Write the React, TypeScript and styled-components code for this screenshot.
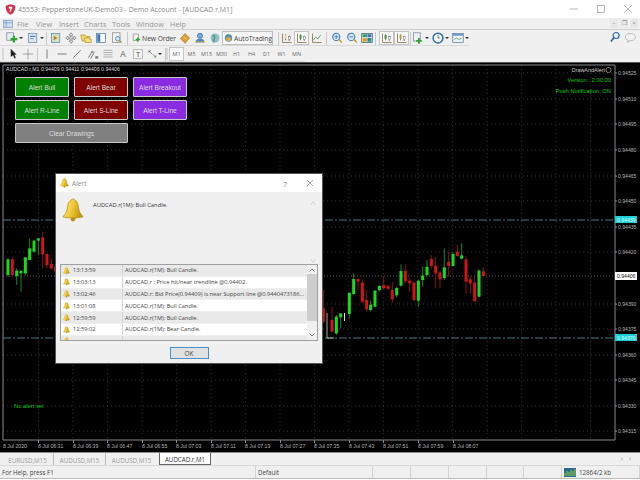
import React from 'react'
import styled, { createGlobalStyle } from 'styled-components'

const GlobalStyle = createGlobalStyle`
  html, body { margin: 0; padding: 0; background: #fff; }
  * { box-sizing: border-box; }
`

const UI_FONT = `"Open Sans", "Noto Sans", "Liberation Sans", sans-serif`
const CHART_FONT = `"Liberation Sans", Arial, sans-serif`

// candles read off the picture: [x, high, low, body top, body bottom, up?]  (in 3x crop units)
const leftCandles: number[][] = [
  [24, 145, 200, 148, 195, 1], [37, 140, 200, 148, 195, 0], [50, 175, 225, 182, 198, 1],
  [63, 180, 245, 183, 190, 1], [76, 140, 195, 142, 190, 1], [89, 85, 150, 115, 150, 1],
  [102, 90, 128, 92, 125, 1], [115, 85, 135, 85, 92, 1], [128, 65, 175, 82, 133, 0],
  [141, 130, 175, 132, 165, 0], [154, 145, 180, 162, 175, 0], [167, 165, 195, 170, 185, 0],
]
const rightCandles: number[][] = [
  [10, 240, 340, 295, 335, 0], [36, 290, 365, 330, 365, 0], [49, 315, 375, 320, 370, 1],
  [62, 310, 355, 310, 322, 1], [88, 248, 325, 248, 312, 1], [101, 190, 255, 207, 252, 1],
  [114, 205, 240, 207, 215, 0], [127, 210, 280, 218, 275, 0], [140, 240, 305, 270, 298, 0],
  [152, 272, 305, 284, 300, 1], [165, 240, 292, 242, 290, 1], [178, 225, 245, 228, 240, 1],
  [191, 198, 240, 225, 235, 0], [204, 225, 240, 228, 236, 0], [217, 215, 278, 240, 268, 0],
  [230, 230, 262, 234, 256, 1], [243, 163, 230, 183, 227, 1], [256, 163, 220, 183, 214, 0],
  [269, 205, 245, 212, 220, 0], [282, 212, 272, 218, 270, 0], [295, 208, 290, 212, 272, 1],
  [308, 170, 230, 197, 210, 1], [321, 150, 200, 170, 195, 1], [334, 135, 175, 147, 168, 0],
  [347, 140, 235, 167, 190, 0], [360, 185, 235, 187, 208, 0], [373, 115, 210, 172, 204, 1],
  [386, 125, 200, 155, 168, 0], [399, 125, 170, 132, 168, 1], [412, 105, 140, 125, 138, 0],
  [425, 100, 148, 136, 146, 1], [438, 140, 250, 148, 215, 0], [451, 200, 250, 208, 220, 0],
  [464, 195, 275, 218, 274, 0], [477, 178, 262, 182, 260, 1], [490, 172, 200, 184, 198, 0],
]

const prices = [
  ['0.94525', 73], ['0.94510', 99], ['0.94495', 124], ['0.94480', 150], ['0.94465', 176],
  ['0.94450', 201], ['0.94435', 227], ['0.94420', 252], ['0.94390', 304], ['0.94375', 329],
  ['0.94360', 355], ['0.94345', 380], ['0.94330', 406], ['0.94315', 431],
] as [string, number][]

const times = [
  ['8 Jul 06:31', 38], ['8 Jul 06:39', 73], ['8 Jul 06:47', 107], ['8 Jul 06:55', 142],
  ['8 Jul 07:03', 176], ['8 Jul 07:11', 211], ['8 Jul 07:19', 245], ['8 Jul 07:27', 280],
  ['8 Jul 07:35', 314], ['8 Jul 07:43', 349], ['8 Jul 07:51', 383], ['8 Jul 07:59', 418],
  ['8 Jul 08:07', 453],
] as [string, number][]

const gridX = [38.6, 73, 107.6, 142, 176.6, 211, 245.6, 280, 314.6, 349, 383.6, 418, 452.6, 487, 521.6, 556, 590.6]

const alerts = [
  ['13:13:59', 'AUDCAD.r(1M): Bull Candle.'],
  ['13:03:13', 'AUDCAD.r : Price hit/near trendline @0.94402.'],
  ['13:02:46', 'AUDCAD.r: Bid Price(0.94409) is near Support line @0.9440473186...'],
  ['13:01:08', 'AUDCAD.r(1M): Bull Candle.'],
  ['12:59:59', 'AUDCAD.r(1M): Bull Candle.'],
  ['12:59:02', 'AUDCAD.r(1M): Bear Candle.'],
]

const menus = [['File', 19], ['View', 23], ['Insert', 25], ['Charts', 28], ['Tools', 24], ['Window', 34], ['Help', 20]] as [string, number][]
const periods = ['M1', 'M5', 'M15', 'M30', 'H1', 'H4', 'D1', 'W1', 'MN']

const Page = styled.div`
  width: 640px;
  height: 480px;
  display: flex;
  flex-direction: column;
  overflow: hidden;
  background: #f0f0f0;
  font-family: ${UI_FONT};
`

const TitleBar = styled.div`
  height: 18px;
  flex: none;
  background: #fff;
  display: flex;
  align-items: center;
  padding-left: 5px;
  font-size: 7px;
  color: #8a8a8a;
  gap: 2px;
`

const TitleText = styled.span`
  flex: 1;
`

const WinButton = styled.span`
  width: 25px;
  height: 18px;
  display: flex;
  align-items: center;
  justify-content: center;
`

const MenuBar = styled.div`
  height: 12px;
  flex: none;
  display: flex;
  align-items: center;
  padding-left: 3px;
  font-size: 7.4px;
  color: #969696;
  border-bottom: 1px solid #cfcfcf;
`

const MenuItem = styled.span<{ $w: number }>`
  width: ${p => p.$w}px;
  flex: none;
`

const MdiButtons = styled.div`
  margin-left: auto;
  display: flex;
  gap: 2px;
  padding-right: 2px;
`

const MdiButton = styled.span`
  width: 8px;
  height: 9px;
  background: #e8e8e8;
  color: #8a8a8a;
  font-size: 6px;
  line-height: 9px;
  text-align: center;
`

const ToolRow = styled.div<{ $end: number; $pad: number }>`
  height: 16px;
  flex: none;
  display: flex;
  align-items: center;
  padding-left: ${p => p.$pad}px;
  position: relative;
  background: linear-gradient(#d9d9d9, #d9d9d9) no-repeat 0 100% / ${p => p.$end}px 1px;
`

const Tool = styled.span<{ $w?: number; $pressed?: boolean }>`
  width: ${p => p.$w ?? 15}px;
  height: 14px;
  flex: none;
  display: flex;
  align-items: center;
  justify-content: center;
  gap: 1px;
  background: ${p => (p.$pressed ? '#f8f8f8' : 'transparent')};
  border: 1px solid ${p => (p.$pressed ? '#c4c4c4' : 'transparent')};
`

const Caret = styled.i`
  width: 0;
  height: 0;
  border-left: 2px solid transparent;
  border-right: 2px solid transparent;
  border-top: 2px solid #333;
`

const Sep = styled.span<{ $l?: number; $r?: number }>`
  width: 1px;
  height: 13px;
  flex: none;
  background: #c8c8c8;
  margin-left: ${p => p.$l ?? 0}px;
  margin-right: ${p => p.$r ?? 0}px;
`

const TextTool = styled.span<{ $w: number; $pressed?: boolean }>`
  width: ${p => p.$w}px;
  height: 14px;
  flex: none;
  display: flex;
  align-items: center;
  gap: 1px;
  padding-left: 1px;
  font-size: 6.8px;
  letter-spacing: -0.1px;
  color: #444;
  white-space: nowrap;
  background: ${p => (p.$pressed ? '#f8f8f8' : 'transparent')};
  border: 1px solid ${p => (p.$pressed ? '#bdbdbd' : 'transparent')};
`

const Grabber = styled.span`
  width: 2px;
  height: 12px;
  flex: none;
  margin-right: 1px;
  background: #d8d8d8;
`

const Period = styled.span<{ $active?: boolean }>`
  width: 15px;
  height: 14px;
  flex: none;
  display: flex;
  align-items: center;
  justify-content: center;
  font-size: 5.4px;
  color: #666;
  background: ${p => (p.$active ? '#fafafa' : 'transparent')};
  border: 1px solid ${p => (p.$active ? '#c4c4c4' : 'transparent')};
`

const RightTools = styled.div`
  position: absolute;
  right: 2px;
  top: 1px;
  display: flex;
  gap: 3px;
`

const ChartArea = styled.div`
  flex: 1;
  position: relative;
  background: #000;
  overflow: hidden;
  border-top: 1px solid #555;
`

const ChartDrawing = styled.svg`
  display: block;
  width: 640px;
  height: 389px;
  text {
    font-family: ${CHART_FONT};
  }
`

const PanelGrid = styled.div`
  position: absolute;
  left: 15px;
  top: 14px;
  display: grid;
  grid-template-columns: repeat(3, 54px);
  grid-auto-rows: 20px;
  column-gap: 5px;
  row-gap: 3px;
`

const PanelButton = styled.div<{ $bg: string; $span?: number }>`
  grid-column: span ${p => p.$span ?? 1};
  background: ${p => p.$bg};
  border: 1px solid #c8c8c8;
  border-radius: 1px;
  color: #dcdcdc;
  font: 6.6px ${CHART_FONT};
  display: flex;
  align-items: center;
  justify-content: center;
`

const Dialog = styled.div`
  position: absolute;
  left: 56px;
  top: 111px;
  width: 266px;
  height: 189px;
  background: #f0f0f0;
  display: flex;
  flex-direction: column;
  box-shadow: 0 0 0 1px #555;
`

const DialogTitle = styled.div`
  height: 18px;
  flex: none;
  background: #fff;
  display: flex;
  align-items: center;
  padding: 0 8px 0 4px;
  gap: 3px;
  font-size: 6.6px;
  color: #8a8a8a;
`

const DialogHelp = styled.span`
  margin-left: auto;
  margin-right: 16px;
  font-size: 8px;
  color: #888;
`

const MessageRow = styled.div`
  height: 72px;
  flex: none;
  display: flex;
  padding: 6px 4px 0 6px;
`

const MessageText = styled.div`
  flex: 1;
  padding: 3px 0 0 9px;
  font-size: 5.8px;
  color: #333;
`

const MessageScroll = styled.div`
  width: 10px;
  height: 62px;
  margin-top: 3px;
  display: flex;
  flex-direction: column;
  justify-content: space-between;
  align-items: center;
`

const AlertList = styled.div`
  height: 77px;
  flex: none;
  margin: 0 4px;
  border: 1px solid #a0a0a0;
  display: flex;
  background: #fff;
  overflow: hidden;
`

const AlertRows = styled.div`
  flex: 1;
  overflow: hidden;
`

const AlertRow = styled.div<{ $odd: boolean }>`
  height: 11.8px;
  display: flex;
  align-items: center;
  background: ${p => (p.$odd ? '#e9e9e9' : '#fff')};
  border-bottom: 1px solid #efefef;
  font-size: 5.7px;
  color: #444;
`

const AlertTime = styled.span`
  width: 62px;
  height: 100%;
  flex: none;
  display: flex;
  align-items: center;
  gap: 3px;
  padding-left: 2px;
  border-right: 1px solid #d2d2d2;
`

const AlertMessage = styled.span`
  padding-left: 2px;
  white-space: nowrap;
`

const ListScroll = styled.div`
  width: 10px;
  flex: none;
  background: #f0f0f0;
  display: flex;
  flex-direction: column;
  align-items: center;
  justify-content: space-between;
  padding: 3px 0;
`

const ListThumb = styled.div`
  width: 100%;
  height: 47px;
  margin-bottom: 10px;
  background: #cdcdcd;
`

const DialogFooter = styled.div`
  flex: 1;
  display: flex;
  justify-content: center;
  padding-top: 6px;
`

const OkButton = styled.div`
  width: 39px;
  height: 12px;
  background: #e1e1e1;
  border: 1px solid #4a90c8;
  font-size: 6.4px;
  color: #444;
  display: flex;
  align-items: center;
  justify-content: center;
`

const TabBar = styled.div`
  height: 13px;
  flex: none;
  display: flex;
  align-items: stretch;
  padding-left: 2px;
  border-top: 1px solid #888;
  background: #f0f0f0;
  position: relative;
`

const Tab = styled.div<{ $active?: boolean; $line?: boolean }>`
  width: 52px;
  flex: none;
  display: flex;
  align-items: center;
  justify-content: center;
  padding-top: 2px;
  font-size: 6.2px;
  color: ${p => (p.$active ? '#333' : '#9a9a9a')};
  background: ${p => (p.$active ? '#fff' : 'transparent')};
  border-right: 1px solid ${p => (p.$line ? '#bbb' : 'transparent')};
  ${p => p.$active && 'border: 1px solid #666; border-top: 0; margin-left: 1px;'}
`

const TabArrows = styled.span`
  position: absolute;
  right: 3px;
  top: 1px;
  font-size: 7px;
  color: #888;
  letter-spacing: 6px;
`

const StatusBar = styled.div`
  height: 14px;
  flex: none;
  display: flex;
  border-top: 1px solid #d8d8d8;
  border-bottom: 1px solid #bbb;
  font-size: 6.2px;
  color: #444;
`

const StatusCell = styled.div<{ $w: number }>`
  width: ${p => p.$w}px;
  flex: none;
  display: flex;
  align-items: center;
  gap: 3px;
  padding-left: 2px;
  border-right: 1px solid #d0d0d0;
  white-space: nowrap;
`

const Footer = styled.div`
  height: 1px;
  flex: none;
  background: #fff;
`

const Ico = ({ children, s = 12 }: { children: React.ReactNode; s?: number }) => (
  <svg width={s} height={s} viewBox="0 0 16 16" style={{ display: 'block' }}>
    {children}
  </svg>
)

const Chevron = ({ d, color }: { d: string; color: string }) => (
  <svg width="6" height="4" viewBox="0 0 6 4" style={{ display: 'block', flex: 'none' }}>
    <path d={d} fill="none" stroke={color} strokeWidth="0.800" />
  </svg>
)

const Bell = ({ size }: { size: number }) => (
  <svg width={size} height={size * 1.08} viewBox="0 0 24 26" style={{ display: 'block', flex: 'none' }}>
    <defs>
      <linearGradient id="bellGold" x1="0" x2="1" y1="0" y2="0.3">
        <stop offset="0" stopColor="#ffe98a" />
        <stop offset="0.5" stopColor="#f4cc3a" />
        <stop offset="1" stopColor="#c79a12" />
      </linearGradient>
    </defs>
    <circle cx="12" cy="23" r="2.6" fill="#b98f1a" />
    <path d="M12 1c-1.4 0-2 .8-2.2 1.8C6.8 4 6.3 7 6 10.5 5.700 14.500 3.500 18 1 20.500c3 1.800 19 1.800 22 0-2.500-2.500-4.700-6-5-10C17.700 7 17.200 4 14.200 2.800 14 1.800 13.400 1 12 1z" fill="url(#bellGold)" stroke="#b08a18" strokeWidth="0.8" />
  </svg>
)

const Logo = () => (
  <svg width="11" height="11" viewBox="0 0 16 16" style={{ display: 'block', flex: 'none' }}>
    <path d="M1 2.500 8 0.500l7 2c0 6-1.500 10.500-7 13-5.500-2.500-7-7-7-13z" fill="#d8304a" />
    <path d="M5.500 4h5v1.600L8 11.500 6.500 11 8 6.500H5.500z" fill="#fff" />
  </svg>
)

const ChartDoc = ({ accent }: { accent: string }) => (
  <Ico>
    <rect x="2" y="2" width="11" height="12" fill="#dce8f4" stroke="#6a86a6" />
    <rect x="4" y="5" width="7" height="1.500" fill={accent} />
    <rect x="4" y="8" width="5" height="1.500" fill="#7fa0c0" />
  </Ico>
)

const GreenPlus = () => (
  <Ico>
    <rect x="1" y="1" width="9" height="10" fill="#e6eef6" stroke="#7a8a9a" />
    <path d="M9 5h3v3h3v3h-3v3H9v-3H6V8h3z" fill="#2fa52f" />
  </Ico>
)

const Magnifier = ({ sign, color }: { sign: string; color: string }) => (
  <Ico>
    <circle cx="7" cy="6.500" r="4.800" fill="#d5e9fa" stroke={color} strokeWidth="1.400" />
    <path d="M10.500 10l4 4" stroke="#c79a2a" strokeWidth="2.200" />
    <path d={sign} stroke={color} strokeWidth="1.200" />
  </Ico>
)

const CandleTool = ({ mark }: { mark: string }) => (
  <Ico>
    <path d="M2 2v12h12" fill="none" stroke="#7a6a3a" />
    <path d="M6 3v8M11 5v7" stroke="#555" />
    <rect x="4.800" y="4" width="2.600" height="5" fill={mark} />
    <rect x="9.800" y="6" width="2.600" height="4" fill="#fff" stroke="#555" strokeWidth="0.500" />
  </Ico>
)

const FirstToolbar = () => (
  <ToolRow $end={469} $pad={4}>
    <Tool $w={21}><GreenPlus /><Caret /></Tool>
    <Tool $w={21}><ChartDoc accent="#3a78c0" /><Caret /></Tool>
    <Sep $r={1} />
    <Tool>
      <Ico><rect x="2" y="2" width="11" height="12" fill="#cfe3c0" stroke="#5a8ab0" /><path d="M5 5l5 3-5 3z" fill="#c87a20" /></Ico>
    </Tool>
    <Tool>
      <Ico><path d="M8 1l2.500 3H9v3h3V5.500L15 8l-3 2.500V9H9v3h1.500L8 15l-2.500-3H7V9H4v1.500L1 8l3-2.500V7h3V4H5.500z" fill="#e8e8e8" stroke="#666" strokeWidth="0.800" /></Ico>
    </Tool>
    <Tool>
      <Ico><path d="M1 4h6l1.500 2H13v6H3z" fill="#f4d76a" stroke="#b99020" /><path d="M6 8h6l1.500 2H15v4H7z" fill="#f8e28e" stroke="#b99020" /></Ico>
    </Tool>
    <Tool $w={16}>
      <Ico><rect x="2" y="2" width="12" height="12" fill="#fff" stroke="#4a78a8" /><rect x="3" y="3" width="4" height="10" fill="#3a78c0" /></Ico>
    </Tool>
    <Tool $w={16}>
      <Ico><rect x="2" y="1" width="10" height="13" fill="#f4f4f4" stroke="#8a8a8a" /><circle cx="9" cy="9" r="3" fill="#d0e6f6" stroke="#4a78a8" /><path d="M11 11l3 3" stroke="#b08a30" strokeWidth="1.500" /></Ico>
    </Tool>
    <Sep $l={2} $r={2} />
    <TextTool $w={47}>
      <Ico><rect x="2" y="1" width="9" height="11" fill="#f2f2f2" stroke="#777" /><path d="M9 7h2.500v2.500H14v2.500h-2.500v2.500H9V12H6.500V9.500H9z" fill="#2fa52f" /></Ico>
      New Order
    </TextTool>
    <Tool>
      <Ico><path d="M2 9l6-7 6 6-6 7z" fill="#e0a030" stroke="#a06a10" strokeWidth="0.800" /><path d="M6 6l4 4" stroke="#fbe6a0" /></Ico>
    </Tool>
    <Tool>
      <Ico><circle cx="8" cy="5" r="3.400" fill="#79a8e0" stroke="#3a6aa8" /><path d="M2 14c0-4 3-5 6-5s6 1 6 5z" fill="#4f86c8" /><path d="M2 13h12" stroke="#d8a030" /></Ico>
    </Tool>
    <Tool>
      <Ico><circle cx="8" cy="8" r="6" fill="#8fbfd0" /><path d="M5 4c2 1 3 3 2 5s-1 3 0 5" fill="none" stroke="#5a9a5a" strokeWidth="2" /></Ico>
    </Tool>
    <TextTool $w={51} $pressed>
      <Ico><circle cx="8" cy="8" r="6.500" fill="#4a90c8" /><rect x="4" y="7" width="8" height="6" fill="#e8b030" /><path d="M5 7V5a3 3 0 0 1 6 0" fill="none" stroke="#6aa84a" strokeWidth="1.500" /></Ico>
      AutoTrading
    </TextTool>
    <Sep $l={5} />
    <Tool><CandleTool mark="#e8d8a0" /></Tool>
    <Tool $pressed><CandleTool mark="#2fa52f" /></Tool>
    <Tool>
      <Ico><path d="M2 2v12h12" fill="none" stroke="#7a6a3a" /><path d="M3 11l3-4 3 2 4-5" fill="none" stroke="#3a8a3a" /></Ico>
    </Tool>
    <Sep $l={2} $r={2} />
    <Tool><Magnifier color="#3a78b8" sign="M4.500 6.500h5M7 4v5" /></Tool>
    <Tool><Magnifier color="#3a78b8" sign="M4.500 6.500h5" /></Tool>
    <Tool>
      <Ico><rect x="1" y="2" width="14" height="12" fill="#fff" stroke="#2a5a7a" /><rect x="2" y="3" width="6" height="4" fill="#3a9a5a" /><rect x="8.500" y="3" width="5.500" height="4" fill="#3a70b8" /><rect x="2" y="8" width="6" height="5" fill="#e0a030" /><rect x="8.500" y="8" width="5.500" height="5" fill="#2a8a8a" /></Ico>
    </Tool>
    <Sep $l={1} $r={3} />
    <Tool $pressed><CandleTool mark="#3a8a3a" /></Tool>
    <Tool $pressed><CandleTool mark="#c8a040" /></Tool>
    <Sep $l={1} />
    <Tool $w={19}>
      <Ico><rect x="2" y="1" width="9" height="11" fill="#eef2f6" stroke="#7a8a9a" /><path d="M8 8h2.500v2.500H13V13h-2.500v2.500H8V13H5.500v-2.500H8z" fill="#2fa52f" /></Ico>
      <Caret />
    </Tool>
    <Tool $w={20}>
      <Ico><circle cx="8" cy="8" r="6.500" fill="#fff" stroke="#2a6ab8" strokeWidth="2" /><path d="M8 4v4h3" fill="none" stroke="#2a4a78" /></Ico>
      <Caret />
    </Tool>
    <Tool $w={20}>
      <Ico><rect x="1" y="2" width="14" height="12" fill="#eef4fa" stroke="#5a7a9a" /><rect x="1" y="2" width="14" height="3" fill="#6a9ad0" /><path d="M3 10l3-2 3 2 4-2" fill="none" stroke="#3a8a5a" /></Ico>
      <Caret />
    </Tool>
    <RightTools>
      <Ico><circle cx="9.500" cy="6" r="4" fill="#e8f2fc" stroke="#2a6ab8" strokeWidth="1.600" /><path d="M6.500 9l-4 5" stroke="#2a5a98" strokeWidth="2" /></Ico>
      <Ico s={14}><path d="M7 3c3 0 6 1 6 4s-3 4-6 4l-3 2 1-2.500C3 10 1.500 9 1.500 7 1.500 4 4 3 7 3z" fill="#f4f4f4" stroke="#b4b4b4" /></Ico>
    </RightTools>
  </ToolRow>
)

const SecondToolbar = () => (
  <ToolRow $end={305} $pad={2}>
    <Grabber />
    <Tool>
      <Ico><path d="M5 1v11l3-2.500 2 4.500 1.800-.8-2-4.300H13z" fill="#222" /></Ico>
    </Tool>
    <Tool>
      <Ico><path d="M8 1v14M1 8h14" stroke="#777" strokeWidth="0.800" /></Ico>
    </Tool>
    <Sep $l={2} $r={1} />
    <Tool><Ico><path d="M8 2v12" stroke="#555" /></Ico></Tool>
    <Tool><Ico><path d="M2 8h12" stroke="#555" /></Ico></Tool>
    <Tool $w={16}><Ico><path d="M3 13L13 3" stroke="#555" /></Ico></Tool>
    <Tool $w={16}>
      <Ico><path d="M2 13l5-9M5 14l5-9" stroke="#555" /><circle cx="7" cy="5" r="1.500" fill="#888" /><path d="M11 11h4v3h-4z" fill="#777" /></Ico>
    </Tool>
    <Tool $w={14}>
      <Ico><path d="M2 3h12M2 6h12M2 9h12M2 12h12" stroke="#999" /></Ico>
    </Tool>
    <Tool>
      <Ico><text x="8" y="12" fontSize="11" textAnchor="middle" fill="#555" fontFamily={CHART_FONT}>A</text></Ico>
    </Tool>
    <Tool $w={16}>
      <Ico><rect x="2" y="2" width="12" height="12" fill="#f4f4f4" stroke="#aaa" /><text x="8" y="12" fontSize="10" textAnchor="middle" fill="#555" fontFamily={CHART_FONT}>T</text></Ico>
    </Tool>
    <Tool $w={17}>
      <Ico><path d="M3 3l5 5M3 3h3M3 3v3" stroke="#555" fill="none" /><path d="M14 13l-5-5M14 13h-3M14 13v-3" stroke="#3a7a3a" fill="none" /></Ico>
      <Caret />
    </Tool>
    <Sep $l={2} />
    <Grabber />
    {periods.map((p, i) => (
      <Period key={p} $active={i === 0}>{p}</Period>
    ))}
  </ToolRow>
)

const ChartSvg = () => {
  const candle = (c: number[], x: number, i: number) => {
    const y = (v: number) => 210 + v / 3
    const col = c[5] ? '#18dc18' : '#d41414'
    return (
      <g key={i}>
        <rect x={x - 0.5} y={y(c[1])} width={1} height={(c[2] - c[1]) / 3} fill={c[5] ? '#0f8f0f' : '#8f1010'} />
        <rect x={x - 1.500} y={y(c[3])} width={3} height={(c[4] - c[3]) / 3} fill={col} />
      </g>
    )
  }
  return (
    <ChartDrawing viewBox="0 63 640 389" style={{ height: 389 }}>
      {gridX.map(x => (
        <line key={x} x1={x} x2={x} y1={65} y2={440} stroke="#303030" strokeDasharray="1 3" />
      ))}
      {prices.map(([, y]) => (
        <line key={y} x1={3} x2={615} y1={y} y2={y} stroke="#303030" strokeDasharray="1 3" />
      ))}
      <line x1={3} x2={615} y1={276} y2={276} stroke="#5a5a5a" strokeDasharray="1 2" />
      {[220, 338].map(y => (
        <line key={y} x1={3} x2={615} y1={y} y2={y} stroke="#4f7878" strokeDasharray="8 2 2 2" />
      ))}
      <path d="M327 313V338H334" fill="none" stroke="#aaa" />
      <path d="M3 65H615V440H3z" fill="none" stroke="#8a8a8a" />
      {leftCandles.map((c, i) => candle(c, c[0] / 3, i))}
      {rightCandles.map((c, i) => candle(c, 320 + c[0] / 3, i + 100))}
      <rect x={344} y={313} width={1} height={8} fill="#ddd" />

      <text x={6} y={71} fontSize={5.2} fill="#d8d8d8">AUDCAD.r,M1  0.94409 0.94411 0.94406 0.94406</text>
      <text x={605} y={72} fontSize={5.400} fill="#c8c8c8" textAnchor="end">DrawAndAlert</text>
      <circle cx={608.500} cy={70} r={2.600} fill="none" stroke="#c8c8c8" strokeWidth={0.600} />
      <text x={611} y={82} fontSize={5.800} fill="#12c812" textAnchor="end">Version : 2.00.00</text>
      <text x={611} y={93} fontSize={5.800} fill="#12c812" textAnchor="end">Push Notification: ON</text>
      <text x={14} y={408} fontSize={5.800} fill="#12c812">No alert set</text>

      {prices.map(([label, y]) => (
        <g key={label}>
          <line x1={615} x2={617} y1={y} y2={y} stroke="#8a8a8a" />
          <text x={618} y={y + 2} fontSize={5.100} fill="#b4b4b4">{label}</text>
        </g>
      ))}
      {[219, 337].map(y => (
        <g key={y}>
          <rect x={615} y={y - 3} width={22} height={7} fill="#20cfd6" />
          <text x={617} y={y + 2.500} fontSize={5.100} fill="#d8ffff">{y === 219 ? '0.94439' : '0.94370'}</text>
        </g>
      ))}
      <rect x={615} y={272} width={22} height={8} fill="#fff" />
      <text x={617} y={278} fontSize={5.100} fill="#111">0.94406</text>

      <text x={3} y={448} fontSize={5.200} fill="#b4b4b4">8 Jul 2020</text>
      {times.map(([label, x]) => (
        <g key={label}>
          <line x1={x + 0.500} x2={x + 0.500} y1={440} y2={443} stroke="#8a8a8a" />
          <text x={x} y={448} fontSize={5.200} fill="#b4b4b4">{label}</text>
        </g>
      ))}
    </ChartDrawing>
  )
}

const AlertDialog = () => (
  <Dialog>
    <DialogTitle>
      <Bell size={9} />
      Alert
      <DialogHelp>?</DialogHelp>
      <svg width="8" height="8" viewBox="0 0 8 8"><path d="M1 1l6 6M7 1L1 7" stroke="#888" strokeWidth="0.700" /></svg>
    </DialogTitle>
    <MessageRow>
      <Bell size={22} />
      <MessageText>AUDCAD.r(1M): Bull Candle.</MessageText>
      <MessageScroll>
        <Chevron d="M.5 3.500L3 1l2.500 2.500" color="#c4c4c4" />
        <Chevron d="M.5.500L3 3 5.500.500" color="#c4c4c4" />
      </MessageScroll>
    </MessageRow>
    <AlertList>
      <AlertRows>
        {alerts.map(([time, text], i) => (
          <AlertRow key={time} $odd={i % 2 === 0}>
            <AlertTime><Bell size={7} />{time}</AlertTime>
            <AlertMessage>{text}</AlertMessage>
          </AlertRow>
        ))}
        <AlertRow $odd>
          <AlertTime><Bell size={7} /></AlertTime>
        </AlertRow>
      </AlertRows>
      <ListScroll>
        <Chevron d="M.5 3.500L3 1l2.500 2.500" color="#666" />
        <ListThumb />
        <Chevron d="M.5.500L3 3 5.500.500" color="#666" />
      </ListScroll>
    </AlertList>
    <DialogFooter>
      <OkButton>OK</OkButton>
    </DialogFooter>
  </Dialog>
)

export default function App() {
  return (
    <Page>
      <GlobalStyle />
      <TitleBar>
        <Logo />
        <TitleText>45553: PepperstoneUK-Demo03 - Demo Account - [AUDCAD.r,M1]</TitleText>
        <WinButton><svg width="8" height="8" viewBox="0 0 8 8"><path d="M0 4h8" stroke="#999" strokeWidth="0.700" /></svg></WinButton>
        <WinButton><svg width="8" height="8" viewBox="0 0 8 8"><rect x="0.500" y="0.500" width="7" height="7" fill="none" stroke="#999" strokeWidth="0.700" /></svg></WinButton>
        <WinButton><svg width="8" height="8" viewBox="0 0 8 8"><path d="M0 0l8 8M8 0L0 8" stroke="#999" strokeWidth="0.700" /></svg></WinButton>
      </TitleBar>
      <MenuBar>
        <MenuItem $w={14}>
          <Ico s={10}><rect x="1" y="2" width="14" height="12" fill="#cfe0f0" stroke="#6a8ab0" /><path d="M1 6h14M5 2v12" stroke="#6a8ab0" /></Ico>
        </MenuItem>
        {menus.map(([m, w]) => (
          <MenuItem key={m} $w={w}>{m}</MenuItem>
        ))}
        <MdiButtons>
          <MdiButton>–</MdiButton>
          <MdiButton>❐</MdiButton>
          <MdiButton>×</MdiButton>
        </MdiButtons>
      </MenuBar>
      <FirstToolbar />
      <SecondToolbar />
      <ChartArea>
        <ChartSvg />
        <PanelGrid>
          <PanelButton $bg="#008000">Alert Bull</PanelButton>
          <PanelButton $bg="#800000">Alert Bear</PanelButton>
          <PanelButton $bg="#8a2be2">Alert Breakout</PanelButton>
          <PanelButton $bg="#008000">Alert R-Line</PanelButton>
          <PanelButton $bg="#800000">Alert S-Line</PanelButton>
          <PanelButton $bg="#8a2be2">Alert T-Line</PanelButton>
          <PanelButton $bg="#808080" $span={2}>Clear Drawings</PanelButton>
        </PanelGrid>
        <AlertDialog />
      </ChartArea>
      <TabBar>
        <Tab $line>EURUSD,M15</Tab>
        <Tab $line>AUDUSD,M15</Tab>
        <Tab>AUDUSD,M15</Tab>
        <Tab $active>AUDCAD.r,M1</Tab>
        <TabArrows>‹›</TabArrows>
      </TabBar>
      <StatusBar>
        <StatusCell $w={256}>For Help, press F1</StatusCell>
        <StatusCell $w={117}>Default</StatusCell>
        <StatusCell $w={38} />
        <StatusCell $w={38} />
        <StatusCell $w={38} />
        <StatusCell $w={37} />
        <StatusCell $w={38} />
        <StatusCell $w={78}>
          <svg width="12" height="9" viewBox="0 0 12 9">
            <rect width="12" height="9" fill="#2a6a8a" />
            <path d="M1 8V5M3 8V3M5 8V4M7 8V2M9 8V3M11 8V1" stroke="#8fd040" />
          </svg>
          12864/2 kb
        </StatusCell>
      </StatusBar>
      <Footer />
    </Page>
  )
}
